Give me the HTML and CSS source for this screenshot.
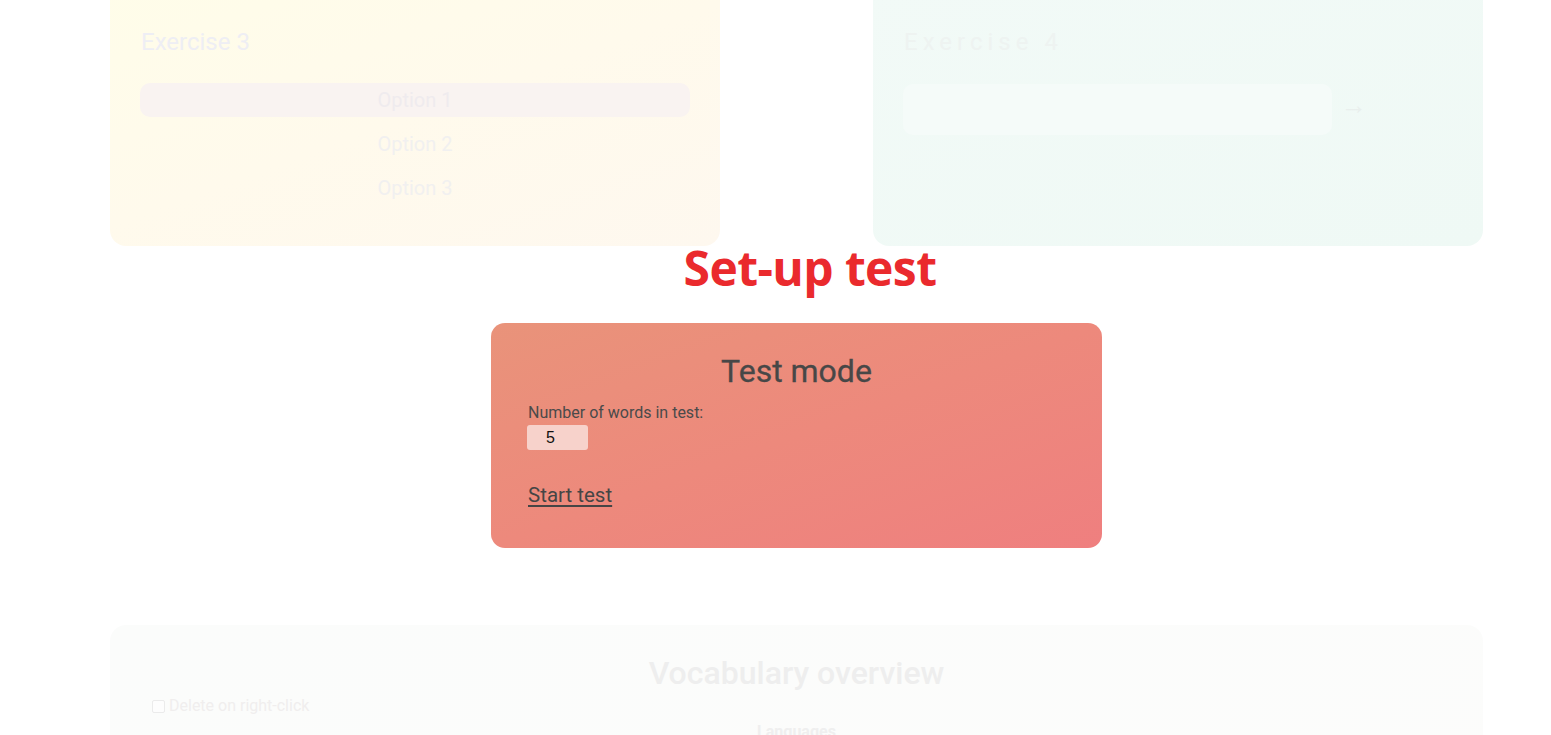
FILE: index.html
```html
<!DOCTYPE html>
<html lang="en">
<head>
<meta charset="utf-8">
<title>Set-up test</title>
<link rel="stylesheet" href="styles.css">
</head>
<body>
<main class="page">
  <section class="exercises">
    <div class="card ex3">
      <h2 class="ex-title">Exercise 3</h2>
      <ul class="options">
        <li class="option active">Option 1</li>
        <li class="option">Option 2</li>
        <li class="option">Option 3</li>
      </ul>
    </div>
    <div class="card ex4">
      <h2 class="ex-title spaced">Exercise 4</h2>
      <div class="answer-row">
        <div class="answer-input"></div>
        <span class="arrow">&#8594;</span>
      </div>
    </div>
  </section>

  <h1 class="setup-title">Set-up test</h1>

  <section class="test-card">
    <h2 class="test-title">Test mode</h2>
    <label class="test-label" for="count">Number of words in test:</label>
    <input class="test-input" id="count" type="text" value="5">
    <a class="start-link" href="#">Start test</a>
  </section>

  <section class="vocab-card">
    <h2 class="vocab-title">Vocabulary overview</h2>
    <label class="delete-opt"><span class="check"></span>Delete on right-click</label>
    <div class="languages">Languages</div>
  </section>
</main>
</body>
</html>
```
FILE: styles.css
```css
html, body {
  margin: 0;
  padding: 0;
  background: #ffffff;
  overflow: hidden;
}
body {
  font-family: Roboto, "Liberation Sans", sans-serif;
  color: #444;
}
.page {
  width: 1373px;
  padding-left: 110px;
  box-sizing: content-box;
}
.exercises {
  display: grid;
  grid-template-columns: 610px 610px;
  column-gap: 153px;
  margin-top: -20px;
}
.card {
  border-radius: 16px;
  padding: 48px 30px 40px 30px;
  height: 266px;
  box-sizing: border-box;
}
.ex3 {
  background: linear-gradient(160deg, #fffde9 0%, #fffaec 50%, #fef8ef 100%);
}
.ex4 {
  background: linear-gradient(160deg, #f2faf7 0%, #eff9f5 100%);
}
.ex-title {
  margin: 0;
  font-size: 24px;
  font-weight: 400;
  line-height: 28px;
  color: #eeeef4;
  padding-left: 1px;
}
.ex4 .ex-title {
  color: #eef3f1;
}
.spaced {
  letter-spacing: 5px;
}
.options {
  list-style: none;
  margin: 27px 0 0 0;
  padding: 0;
  display: flex;
  flex-direction: column;
  gap: 10px;
}
.option {
  height: 34px;
  line-height: 34px;
  text-align: center;
  font-size: 20px;
  color: #f1f0f0;
  border-radius: 10px;
}
.option.active {
  background: #f9f3f1;
  color: #efebee;
}
.option + .option {
  line-height: 35px;
}
.answer-row {
  margin-top: 28px;
  display: flex;
  align-items: center;
  gap: 9px;
}
.answer-input {
  width: 429px;
  height: 51px;
  border-radius: 10px;
  background: #f5fbf9;
}
.arrow {
  font-size: 26px;
  color: #e9efed;
  line-height: 14px;
  padding-bottom: 10px;
}
.setup-title {
  margin: 0;
  padding-left: 27px;
  text-align: center;
  font-family: "Open Sans", "Noto Sans", sans-serif;
  font-weight: 700;
  font-size: 48px;
  line-height: 44px;
  color: #ea2a2d;
  letter-spacing: -0.6px;
}
.test-card {
  width: 611px;
  box-sizing: border-box;
  margin: 33px auto 0 auto;
  border-radius: 14px;
  padding: 28px 37px 40px 37px;
  background: linear-gradient(160deg, #e9937a 0%, #ed897c 50%, #ef7f7f 100%);
  display: flex;
  flex-direction: column;
  align-items: flex-start;
  height: 225px;
}
.test-title {
  align-self: stretch;
  margin: 0;
  text-align: center;
  font-size: 32px;
  font-weight: 400;
  line-height: 40px;
  color: #474747;
  -webkit-text-stroke: 0.3px #474747;
}
.test-label {
  margin-top: 12px;
  font-size: 16px;
  line-height: 19px;
  color: #4a4a4a;
}
.test-input {
  margin-top: 3px;
  width: 61px;
  height: 25px;
  box-sizing: border-box;
  border: none;
  outline: none;
  border-radius: 3px;
  background: #f7d2cb;
  padding: 0 0 0 19px;
  font-family: "Liberation Sans", Arial, sans-serif;
  font-size: 16px;
  color: #111;
  margin-left: -1px;
}
.start-link {
  margin-top: 33px;
  font-size: 20.5px;
  line-height: 24px;
  color: #454545;
  text-decoration: underline;
  text-underline-offset: 3px;
}
.vocab-card {
  margin-top: 77px;
  border-radius: 16px;
  background: linear-gradient(160deg, #fbfcfb 0%, #fcfcfb 100%);
  padding: 28px 42px 40px 42px;
  height: 300px;
  box-sizing: border-box;
}
.vocab-title {
  margin: 0;
  text-align: center;
  font-size: 32px;
  font-weight: 500;
  line-height: 40px;
  color: #eeeeee;
}
.delete-opt {
  display: flex;
  align-items: center;
  gap: 4px;
  margin-top: 3px;
  font-size: 16px;
  line-height: 20px;
  color: #f0eeee;
}
.check {
  width: 11px;
  height: 11px;
  border: 1px solid #ebebeb;
  border-radius: 2px;
  background: #fdfdfd;
}
.languages {
  margin-top: 6px;
  text-align: center;
  font-size: 16px;
  font-weight: 700;
  color: #efefef;
}
```
